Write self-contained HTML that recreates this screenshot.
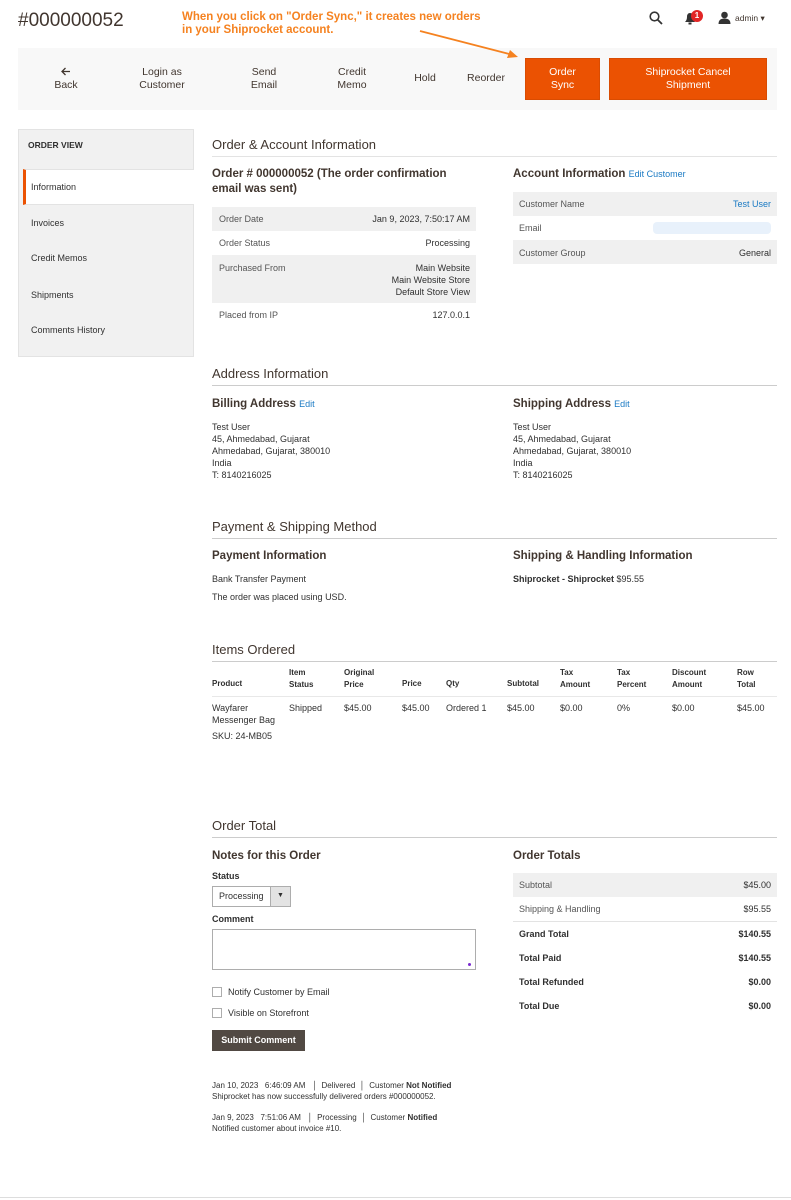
<!DOCTYPE html>
<html><head><meta charset="utf-8"><style>
*{margin:0;padding:0;box-sizing:border-box}
body{width:791px;height:1200px;background:#fff;position:relative;overflow:hidden;font-family:"Liberation Sans",sans-serif;color:#303030}
.t{position:absolute;white-space:nowrap;font-size:9px;line-height:12px}
.b{font-weight:bold}
.h2{position:absolute;font-size:13px;line-height:16px;color:#41362f;white-space:nowrap}
.hr{position:absolute;height:1px;background:#ccc}
.h3{position:absolute;font-size:11.5px;line-height:14px;font-weight:bold;color:#41362f;white-space:nowrap}
.box{position:absolute}
.g{background:#f0f0f0}
.lnk{color:#1979c3}
.r{text-align:right}
.tb{position:absolute;text-align:center;font-size:10.5px;line-height:13px;color:#41362f}
.lab{color:#555}
</style></head><body>

<div class="t" style="left:18px;top:10px;font-size:19px;line-height:22px;color:#41362f">#000000052</div>
<div class="t b" style="left:182px;top:11px;font-size:11.5px;line-height:13px;color:#f58220">When you click on "Order Sync," it creates new orders<br>in your Shiprocket account.</div>

<svg class="box" style="left:649px;top:11px" width="14" height="14"><circle cx="5.5" cy="5.5" r="4.3" fill="none" stroke="#333" stroke-width="1.6"/><line x1="8.7" y1="8.7" x2="13" y2="13" stroke="#333" stroke-width="1.8"/></svg>
<svg class="box" style="left:684px;top:12px" width="12" height="13"><path d="M1 10 Q3 8 3 5 Q3 1 6 1 Q9 1 9 5 Q9 8 11 10 Z" fill="#333"/><rect x="4.5" y="10.5" width="3" height="2" fill="#333"/></svg>
<div class="box" style="left:691px;top:10px;width:12px;height:12px;border-radius:6px;background:#e22626;color:#fff;font-size:8px;line-height:12px;text-align:center;font-weight:bold">1</div>
<svg class="box" style="left:718px;top:11px" width="13" height="13"><circle cx="6.5" cy="4" r="3.3" fill="#333"/><path d="M0.5 13 Q0.5 7.5 6.5 7.5 Q12.5 7.5 12.5 13 Z" fill="#333"/></svg>
<div class="t" style="left:735px;top:12px;font-size:8.5px;color:#41362f">admin ▾</div>

<div class="box" style="left:18px;top:48px;width:759px;height:62px;background:#f8f8f8"></div>
<svg class="box" style="left:415px;top:28px" width="110" height="34"><line x1="5" y1="3" x2="98" y2="27" stroke="#f58220" stroke-width="1.8"/><polygon points="103,29 92,30 95,22" fill="#f58220"/></svg>
<svg class="box" style="left:61px;top:67px" width="10" height="9"><path d="M9 4.5 H1.5 M4.5 1 L1 4.5 L4.5 8" fill="none" stroke="#41362f" stroke-width="1.3"/></svg>
<div class="tb" style="left:36px;top:79px;width:60px">Back</div>
<div class="tb" style="left:122px;top:66px;width:80px">Login as<br>Customer</div>
<div class="tb" style="left:234px;top:66px;width:60px">Send<br>Email</div>
<div class="tb" style="left:322px;top:66px;width:60px">Credit<br>Memo</div>
<div class="tb" style="left:400px;top:72px;width:50px">Hold</div>
<div class="tb" style="left:456px;top:72px;width:60px">Reorder</div>
<div class="box" style="left:525px;top:58px;width:75px;height:42px;background:#eb5202;border:1px solid #d94c02"></div>
<div class="tb" style="left:525px;top:66px;width:75px;color:#fff">Order<br>Sync</div>
<div class="box" style="left:609px;top:58px;width:158px;height:42px;background:#eb5202;border:1px solid #d94c02"></div>
<div class="tb" style="left:609px;top:66px;width:158px;color:#fff">Shiprocket Cancel<br>Shipment</div>

<div class="box" style="left:18px;top:129px;width:176px;height:228px;background:#f1f1f1;border:1px solid #e3e3e3"></div>
<div class="t b" style="left:28px;top:139px;font-size:8.5px;color:#303030">ORDER VIEW</div>
<div class="box" style="left:23px;top:169px;width:171px;height:36px;background:#fff;border-left:3px solid #eb5202;border-bottom:1px solid #e3e3e3;border-top:1px solid #e3e3e3"></div>
<div class="t" style="left:31px;top:181px">Information</div>
<div class="t" style="left:31px;top:217px">Invoices</div>
<div class="t" style="left:31px;top:252px">Credit Memos</div>
<div class="t" style="left:31px;top:289px">Shipments</div>
<div class="t" style="left:31px;top:324px">Comments History</div>

<div class="h2" style="left:212px;top:137px">Order &amp; Account Information</div>
<div class="hr" style="left:212px;top:156px;width:565px;background:#e3e3e3"></div>
<div class="h3" style="left:212px;top:167px;line-height:15px">Order # 000000052 (The order confirmation<br>email was sent)</div>
<div class="box g" style="left:212px;top:207px;width:264px;height:24px"></div>
<div class="box g" style="left:212px;top:255px;width:264px;height:48px"></div>
<div class="t lab" style="left:219px;top:213px">Order Date</div><div class="t r" style="right:321px;top:213px">Jan 9, 2023, 7:50:17 AM</div>
<div class="t lab" style="left:219px;top:237px">Order Status</div><div class="t r" style="right:321px;top:237px">Processing</div>
<div class="t lab" style="left:219px;top:262px">Purchased From</div><div class="t r" style="right:321px;top:262px">Main Website<br>Main Website Store<br>Default Store View</div>
<div class="t lab" style="left:219px;top:309px">Placed from IP</div><div class="t r" style="right:321px;top:309px">127.0.0.1</div>

<div class="h3" style="left:513px;top:167px">Account Information <span class="lnk" style="font-weight:normal;font-size:9px">Edit Customer</span></div>
<div class="box g" style="left:513px;top:192px;width:264px;height:24px"></div>
<div class="box g" style="left:513px;top:240px;width:264px;height:24px"></div>
<div class="t lab" style="left:519px;top:198px">Customer Name</div><div class="t r lnk" style="right:20px;top:198px">Test User</div>
<div class="t lab" style="left:519px;top:222px">Email</div><div class="box" style="left:653px;top:222px;width:118px;height:12px;background:#e8f1fb;border-radius:4px"></div>
<div class="t lab" style="left:519px;top:247px">Customer Group</div><div class="t r" style="right:20px;top:247px">General</div>

<div class="h2" style="left:212px;top:366px">Address Information</div>
<div class="hr" style="left:212px;top:385px;width:565px"></div>
<div class="h3" style="left:212px;top:397px">Billing Address <span class="lnk" style="font-weight:normal;font-size:9px">Edit</span></div>
<div class="t" style="left:212px;top:421px">Test User<br>45, Ahmedabad, Gujarat<br>Ahmedabad, Gujarat, 380010<br>India<br>T: 8140216025</div>
<div class="h3" style="left:513px;top:397px">Shipping Address <span class="lnk" style="font-weight:normal;font-size:9px">Edit</span></div>
<div class="t" style="left:513px;top:421px">Test User<br>45, Ahmedabad, Gujarat<br>Ahmedabad, Gujarat, 380010<br>India<br>T: 8140216025</div>

<div class="h2" style="left:212px;top:519px">Payment &amp; Shipping Method</div>
<div class="hr" style="left:212px;top:538px;width:565px"></div>
<div class="h3" style="left:212px;top:549px">Payment Information</div>
<div class="t" style="left:212px;top:573px">Bank Transfer Payment</div>
<div class="t" style="left:212px;top:591px">The order was placed using USD.</div>
<div class="h3" style="left:513px;top:549px">Shipping &amp; Handling Information</div>
<div class="t" style="left:513px;top:573px"><b>Shiprocket - Shiprocket</b> $95.55</div>

<div class="h2" style="left:212px;top:642px">Items Ordered</div>
<div class="hr" style="left:212px;top:661px;width:565px"></div>
<div class="t b" style="left:212px;top:678px;font-size:8px">Product</div>
<div class="t b" style="left:289px;top:667px;font-size:8px">Item<br>Status</div>
<div class="t b" style="left:344px;top:667px;font-size:8px">Original<br>Price</div>
<div class="t b" style="left:402px;top:678px;font-size:8px">Price</div>
<div class="t b" style="left:446px;top:678px;font-size:8px">Qty</div>
<div class="t b" style="left:507px;top:678px;font-size:8px">Subtotal</div>
<div class="t b" style="left:560px;top:667px;font-size:8px">Tax<br>Amount</div>
<div class="t b" style="left:617px;top:667px;font-size:8px">Tax<br>Percent</div>
<div class="t b" style="left:672px;top:667px;font-size:8px">Discount<br>Amount</div>
<div class="t b" style="left:737px;top:667px;font-size:8px">Row<br>Total</div>
<div class="hr" style="left:212px;top:696px;width:565px;background:#e8e8e8"></div>
<div class="t" style="left:212px;top:702px">Wayfarer<br>Messenger Bag</div>
<div class="t" style="left:289px;top:702px">Shipped</div>
<div class="t" style="left:344px;top:702px">$45.00</div>
<div class="t" style="left:402px;top:702px">$45.00</div>
<div class="t" style="left:446px;top:702px">Ordered 1</div>
<div class="t" style="left:507px;top:702px">$45.00</div>
<div class="t" style="left:560px;top:702px">$0.00</div>
<div class="t" style="left:617px;top:702px">0%</div>
<div class="t" style="left:672px;top:702px">$0.00</div>
<div class="t" style="left:737px;top:702px">$45.00</div>
<div class="t" style="left:212px;top:730px">SKU: 24-MB05</div>

<div class="h2" style="left:212px;top:818px">Order Total</div>
<div class="hr" style="left:212px;top:837px;width:565px"></div>
<div class="h3" style="left:212px;top:849px">Notes for this Order</div>
<div class="t b" style="left:212px;top:870px">Status</div>
<div class="box" style="left:212px;top:886px;width:79px;height:21px;border:1px solid #adadad;background:#fff"></div>
<div class="box" style="left:270px;top:887px;width:20px;height:19px;background:#e3e3e3;border-left:1px solid #adadad"></div>
<div class="t" style="left:219px;top:890px">Processing</div>
<div class="t" style="left:277px;top:890px;font-size:7px">▼</div>
<div class="t b" style="left:212px;top:913px">Comment</div>
<div class="box" style="left:212px;top:929px;width:264px;height:41px;border:1px solid #adadad"></div>
<div class="box" style="left:468px;top:963px;width:3px;height:3px;background:#7b2bd0;border-radius:2px"></div>
<div class="box" style="left:212px;top:987px;width:10px;height:10px;border:1px solid #adadad"></div>
<div class="t" style="left:228px;top:986px">Notify Customer by Email</div>
<div class="box" style="left:212px;top:1008px;width:10px;height:10px;border:1px solid #adadad"></div>
<div class="t" style="left:228px;top:1007px">Visible on Storefront</div>
<div class="box" style="left:212px;top:1030px;width:93px;height:21px;background:#514943"></div>
<div class="t b" style="left:212px;top:1034px;width:93px;text-align:center;color:#fff">Submit Comment</div>
<div class="t" style="left:212px;top:1080px;font-size:8px;line-height:11px">Jan 10, 2023&nbsp;&nbsp;&nbsp;6:46:09 AM&nbsp;&nbsp;&nbsp;│&nbsp;&nbsp;Delivered&nbsp;&nbsp;│&nbsp;&nbsp;Customer <b>Not Notified</b><br>Shiprocket has now successfully delivered orders #000000052.</div>
<div class="t" style="left:212px;top:1112px;font-size:8px;line-height:11px">Jan 9, 2023&nbsp;&nbsp;&nbsp;7:51:06 AM&nbsp;&nbsp;&nbsp;│&nbsp;&nbsp;Processing&nbsp;&nbsp;│&nbsp;&nbsp;Customer <b>Notified</b><br>Notified customer about invoice #10.</div>

<div class="h3" style="left:513px;top:849px">Order Totals</div>
<div class="box g" style="left:513px;top:873px;width:264px;height:24px"></div>
<div class="hr" style="left:513px;top:921px;width:264px;background:#e3e3e3"></div>
<div class="t lab" style="left:519px;top:879px">Subtotal</div><div class="t r" style="right:20px;top:879px">$45.00</div>
<div class="t lab" style="left:519px;top:903px">Shipping &amp; Handling</div><div class="t r" style="right:20px;top:903px">$95.55</div>
<div class="t b" style="left:519px;top:928px">Grand Total</div><div class="t b r" style="right:20px;top:928px">$140.55</div>
<div class="t b" style="left:519px;top:952px">Total Paid</div><div class="t b r" style="right:20px;top:952px">$140.55</div>
<div class="t b" style="left:519px;top:976px">Total Refunded</div><div class="t b r" style="right:20px;top:976px">$0.00</div>
<div class="t b" style="left:519px;top:1000px">Total Due</div><div class="t b r" style="right:20px;top:1000px">$0.00</div>

<div class="hr" style="left:0;top:1197px;width:791px;background:#ddd"></div>
</body></html>
